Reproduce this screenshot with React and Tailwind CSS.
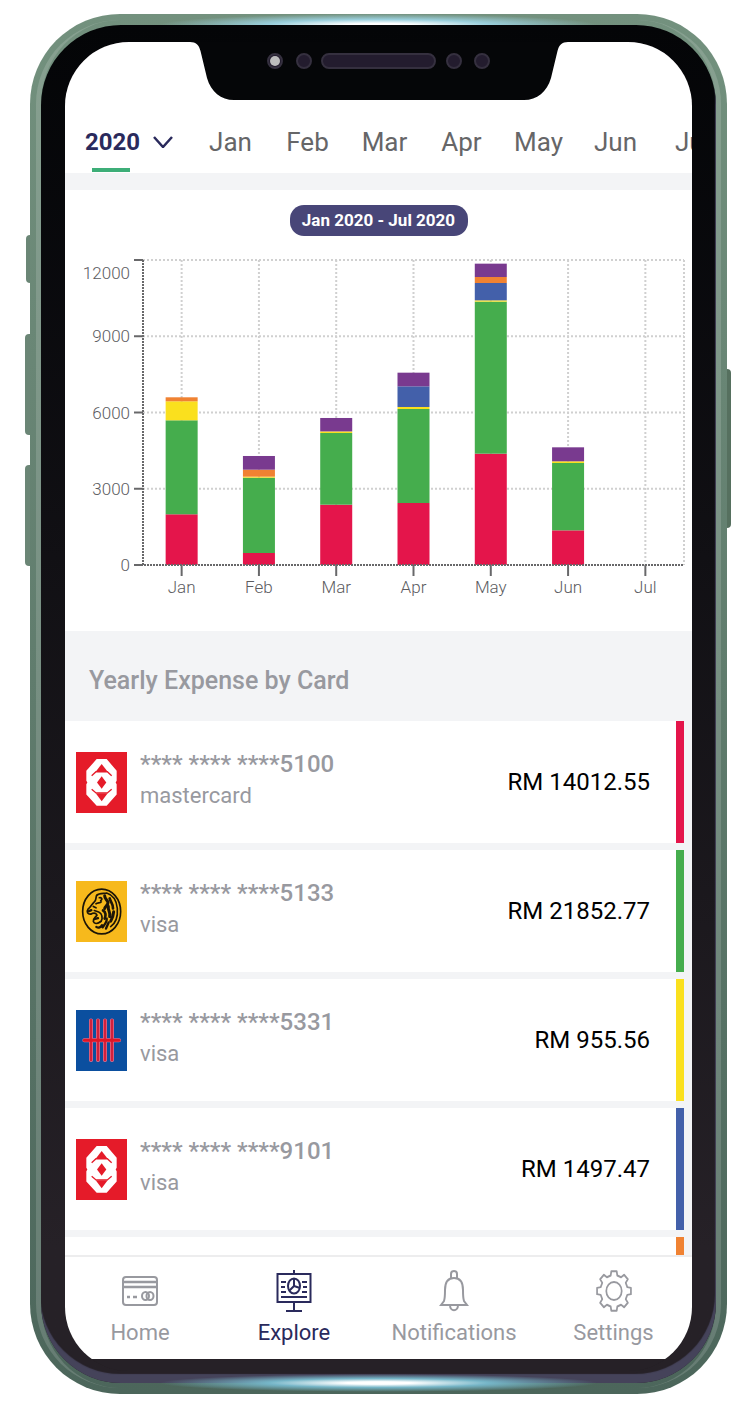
import React, { useState } from "react";

const months = ["Jan", "Feb", "Mar", "Apr", "May", "Jun", "Jul"];

const colors = {
  red: "#e4154b",
  green: "#45ad4d",
  yellow: "#fae01e",
  blue: "#4360aa",
  orange: "#f08232",
  purple: "#793a8f",
};

const expenses = [
  { month: "Jan", red: 1995, green: 3698, yellow: 748, orange: 157 },
  { month: "Feb", red: 472, green: 2963, yellow: 40, orange: 275, purple: 539 },
  { month: "Mar", red: 2373, green: 2820, yellow: 63, purple: 528 },
  { month: "Apr", red: 2439, green: 3699, yellow: 79, blue: 813, purple: 537 },
  {
    month: "May",
    red: 4380,
    green: 5981,
    yellow: 52,
    blue: 682,
    orange: 236,
    purple: 525,
  },
  { month: "Jun", red: 1364, green: 2649, yellow: 67, purple: 550 },
  { month: "Jul" },
];

const cards = [
  {
    number: "**** **** ****5100",
    type: "mastercard",
    amount: "RM 14012.55",
    bank: "octagon",
    bar: "bg-[#e4154b]",
  },
  {
    number: "**** **** ****5133",
    type: "visa",
    amount: "RM 21852.77",
    bank: "tiger",
    bar: "bg-[#45ad4d]",
  },
  {
    number: "**** **** ****5331",
    type: "visa",
    amount: "RM 955.56",
    bank: "lines",
    bar: "bg-[#fae01e]",
  },
  {
    number: "**** **** ****9101",
    type: "visa",
    amount: "RM 1497.47",
    bank: "octagon",
    bar: "bg-[#4360aa]",
  },
];

const OctagonLogo = () => (
  <svg viewBox="0 0 153 182" preserveAspectRatio="none" className="h-full w-full">
    <rect width="153" height="182" fill="#e51b29" />
    <path
      d="M62 21H92L122 56V86L119 91L122 96V127L92 160H62L31 127V96L34 91L31 86V56Z"
      fill="#fff"
    />
    <g fill="#e51b29" stroke="#e51b29">
      <path d="M77 36L95 59H59Z" stroke="none" />
      <path d="M77 72L91 91L77 110L63 91Z" stroke="none" />
      <path d="M77 147L95 123H59Z" stroke="none" />
      <path
        d="M47 71L60 59H94L107 71M47 111L60 122H94L107 111"
        fill="none"
        strokeWidth="4"
      />
    </g>
  </svg>
);

const TigerLogo = () => (
  <svg viewBox="0 0 153 182" preserveAspectRatio="none" className="h-full w-full">
    <rect width="153" height="182" fill="#f7b91c" />
    <ellipse
      cx="77"
      cy="91"
      rx="57"
      ry="67"
      fill="none"
      stroke="#1c1508"
      strokeWidth="5"
    />
    <g
      fill="none"
      stroke="#1c1508"
      strokeWidth="5"
      strokeLinecap="round"
      strokeLinejoin="round"
    >
      <path d="M62 43C70 36 82 38 92 36C112 42 122 62 124 82C126 106 118 126 104 136" />
      <path d="M62 43C58 51 62 56 55 62C48 68 46 76 36 84C30 92 36 100 44 99" />
      <path d="M44 99C54 94 60 96 63 102C57 109 51 112 52 121C55 129 64 128 71 123" />
      <path d="M71 123C80 120 80 106 75 98C71 92 62 90 55 88" />
      <path d="M60 68C66 64 72 67 76 62M52 76L60 80M70 50C78 48 80 56 74 58" />
      <path d="M86 44C86 54 94 56 96 64C96 72 88 74 86 82" strokeWidth="9" />
      <path d="M101 52C104 64 112 68 111 82M81 88C90 92 90 104 86 112" strokeWidth="8" />
      <path d="M97 76C95 88 104 92 101 106M113 92C112 104 109 112 104 120" strokeWidth="9" />
      <path d="M92 112C94 122 86 130 80 138M61 137C68 142 74 138 78 132M98 124L90 142" strokeWidth="7" />
      <path d="M39 90L46 87M57 113L66 111" strokeWidth="7" />
    </g>
  </svg>
);

const LinesLogo = () => (
  <svg viewBox="0 0 153 182" preserveAspectRatio="none" className="h-full w-full">
    <rect width="153" height="182" fill="#0b4f9f" />
    <g strokeLinecap="round">
      <path
        d="M45 31V149M66 31V149M87 31V149M108 31V149M25 90H129"
        stroke="#e07a98"
        strokeWidth="12"
      />
      <path
        d="M45 31V149M66 31V149M87 31V149M108 31V149"
        stroke="#d2203c"
        strokeWidth="8"
      />
      <path d="M25 90H129" stroke="#e01525" strokeWidth="9" />
    </g>
  </svg>
);

const logos = {
  octagon: OctagonLogo,
  tiger: TigerLogo,
  lines: LinesLogo,
};

const HomeIcon = () => (
  <svg viewBox="0 0 36 42" className="h-[42px] w-9" fill="none" stroke="currentColor" strokeWidth="2">
    <rect x="1" y="7" width="34" height="28" rx="3" />
    <path d="M1 12H35M1 17H35" strokeWidth="2.500" />
    <path d="M5 27H8M11 27H15" strokeWidth="2.500" />
    <ellipse cx="23.500" cy="26" rx="3.500" ry="4" />
    <ellipse cx="28" cy="26" rx="3.500" ry="4" />
  </svg>
);

const ExploreIcon = () => (
  <svg viewBox="0 0 36 42" className="h-[42px] w-9" fill="none" stroke="currentColor" strokeWidth="2">
    <path d="M18 0V4M1.500 4H34.500V32H1.500ZM18 32V41M10 41H26" />
    <path d="M5 12H10M5 17H9M5 22H10M26 12H31M27 17H31M26 22H31M5 27H31" />
    <ellipse cx="18" cy="16" rx="6" ry="7.500" />
    <path d="M18 8V16L13 21M18 16L24 18" />
  </svg>
);

const BellIcon = () => (
  <svg viewBox="0 0 36 42" className="h-[42px] w-9" fill="none" stroke="currentColor" strokeWidth="2">
    <path d="M5 35L8 31C9 28 9 24 9 20C9 12 12 8 18 8C24 8 27 12 27 20C27 24 27 28 28 31L31 35Z" />
    <path d="M15 8.500V4C15 0 21 0 21 4V8.500" />
    <path d="M14 35C14 42 22 42 22 35" />
  </svg>
);

const gearPath = () => {
  const points = [];
  for (let i = 0; i < 8; i++) {
    [
      [-14, 16],
      [-9, 20],
      [9, 20],
      [14, 16],
    ].forEach(([offset, r]) => {
      const angle = ((i * 45 + offset) * Math.PI) / 180;
      points.push(`${21 + r * Math.sin(angle)} ${21 - r * Math.cos(angle)}`);
    });
  }
  return `M${points.join("L")}Z`;
};

const SettingsIcon = () => (
  <svg
    viewBox="0 0 42 42"
    preserveAspectRatio="none"
    className="h-[42px] w-9"
    fill="none"
    stroke="currentColor"
    strokeWidth="2"
    strokeLinejoin="round"
  >
    <path d={gearPath()} />
    <circle cx="21" cy="21" r="9" />
  </svg>
);

const tabs = [
  { label: "Home", Icon: HomeIcon },
  { label: "Explore", Icon: ExploreIcon },
  { label: "Notifications", Icon: BellIcon },
  { label: "Settings", Icon: SettingsIcon },
];

const ExpenseChart = () => {
  const left = 78;
  const right = 619;
  const top = 10;
  const bottom = 315;
  const step = (right - left) / expenses.length;
  const y = (value) => bottom - (value / 12000) * (bottom - top);

  return (
    <svg viewBox="0 0 627 360" className="block w-full" role="img" aria-label="Monthly expenses">
      <g stroke="#d0d0d0" strokeWidth="2" strokeDasharray="2 2">
        {[3000, 6000, 9000, 12000].map((v) => (
          <line key={v} x1={left} x2={right} y1={y(v)} y2={y(v)} />
        ))}
        {expenses.map((e, i) => (
          <line
            key={e.month}
            x1={left + step * (i + 0.5)}
            x2={left + step * (i + 0.5)}
            y1={top}
            y2={bottom}
          />
        ))}
        <line x1={right} x2={right} y1={top} y2={bottom} />
      </g>

      {expenses.map((e, i) => {
        let total = 0;
        return Object.keys(colors)
          .filter((key) => e[key])
          .map((key) => {
            total += e[key];
            return (
              <rect
                key={e.month + key}
                x={left + step * (i + 0.5) - 16}
                y={y(total)}
                width="32"
                height={y(0) - y(e[key])}
                fill={colors[key]}
              />
            );
          });
      })}

      <g stroke="#68686a" strokeWidth="2">
        <path d={`M${left} ${top}V${bottom}H${right}`} fill="none" strokeDasharray="2 1" />
        {[0, 3000, 6000, 9000, 12000].map((v) => (
          <line key={v} x1={left - 9} x2={left} y1={y(v)} y2={y(v)} />
        ))}
        {expenses.map((e, i) => (
          <line
            key={e.month}
            x1={left + step * (i + 0.5)}
            x2={left + step * (i + 0.5)}
            y1={bottom}
            y2={bottom + 11}
          />
        ))}
      </g>

      <g fill="#5c5c5f" className="text-[17px] font-light">
        {[0, 3000, 6000, 9000].map((v) => (
          <text key={v} x="65" y={y(v) + 6} textAnchor="end">
            {v}
          </text>
        ))}
        <text x="65" y="29" textAnchor="end">
          12000
        </text>
        {expenses.map((e, i) => (
          <text key={e.month} x={left + step * (i + 0.5)} y="343" textAnchor="middle">
            {e.month}
          </text>
        ))}
      </g>
    </svg>
  );
};

const Notch = () => (
  <svg
    viewBox="0 0 378 58"
    className="absolute left-1/2 top-0 w-[378px] -translate-x-1/2"
    aria-hidden="true"
  >
    <path
      d="M0 0C6 0 9 3 10.500 9L17 36C21 50 31 58 44 58H334C347 58 357 50 361 36L367.500 9C369 3 372 0 378 0Z"
      fill="#050608"
    />
    <g fill="#231c2e" stroke="#35303f" strokeWidth="2">
      <circle cx="85" cy="19" r="7" />
      <circle cx="114" cy="19" r="7" />
      <rect x="132" y="12" width="113" height="14" rx="7" />
      <circle cx="264" cy="19" r="7" />
      <circle cx="292" cy="19" r="7" />
    </g>
    <circle cx="85" cy="19" r="5" fill="#bdbdbd" />
  </svg>
);

const App = () => {
  const [year, setYear] = useState("2020");
  const [activeTab, setActiveTab] = useState("Explore");

  return (
    <div className="bg-white pt-[14px] pr-[13px] pb-[15px] pl-[30px] font-['Roboto','Liberation_Sans',sans-serif]">
      <div className="relative">
        {/* Side Buttons */}
        <div className="absolute -left-1 top-[221px] h-[48px] w-2 rounded-l bg-[#6b8676]"></div>
        <div className="absolute -left-[5px] top-[320px] h-[101px] w-2 rounded-l bg-[#6b8676]"></div>
        <div className="absolute -left-[5px] top-[451px] h-[101px] w-2 rounded-l bg-[#6b8676]"></div>
        <div className="absolute -right-1 top-[355px] h-[159px] w-2 rounded-r bg-[#56705f]"></div>

        <div className="relative overflow-hidden rounded-[90px] bg-linear-to-b from-[#73917e] to-[#4c665b] p-[11px]">
          <div className="absolute inset-[6px] rounded-[84px] border-[5px] border-y-0 border-white/15"></div>
          <div className="absolute inset-x-[130px] top-0 h-[22px] bg-[radial-gradient(ellipse_50%_50%_at_50%_50%,#ffffff_15%,#9bd0dd_50%,transparent_100%)]"></div>
          <div className="relative rounded-[80px] bg-linear-to-b from-[#040507] to-[#262127] to-90% px-6 pt-[17px] pb-3 shadow-[inset_-1px_-9px_1px_#45435a]">
            <div className="relative overflow-hidden rounded-[64px] bg-[#262127]">
              <div className="bg-white">
                <Notch />

                {/* Month Filter */}
                <header className="flex overflow-hidden pt-[76px] pb-px">
                  <div className="w-[127px] shrink-0">
                    <div className="relative flex h-12 items-center">
                      <select
                        aria-label="Year"
                        value={year}
                        onChange={(e) => setYear(e.target.value)}
                        className="h-12 w-full appearance-none bg-transparent pl-5 text-2xl font-bold text-[#2a2a5c] outline-none"
                      >
                        <option>2020</option>
                        <option>2019</option>
                      </select>
                      <svg
                        viewBox="0 0 20 12"
                        className="pointer-events-none absolute right-[19px] h-3 w-5"
                        fill="none"
                        stroke="#2a2a5c"
                        strokeWidth="2.500"
                      >
                        <path d="M1 1L10 11L19 1" />
                      </svg>
                    </div>
                    <div className="mt-[2px] ml-[27px] h-1 w-[38px] bg-[#3dae78]"></div>
                  </div>
                  {months.map((month) => (
                    <button
                      key={month}
                      className="h-12 w-[77px] shrink-0 text-[26px] text-[#666668]"
                    >
                      {month}
                    </button>
                  ))}
                </header>

                {/* Chart */}
                <section className="border-t-[17px] border-[#f3f4f6] pt-[15px] pb-[21px]">
                  <div className="mx-auto mb-[14px] h-[31px] w-[178px] rounded-[14px] bg-[#484678] text-center text-[17px] leading-[31px] font-bold text-white">
                    Jan 2020 - Jul 2020
                  </div>
                  <ExpenseChart />
                </section>

                {/* Cards */}
                <section className="bg-[#f3f4f6]">
                  <h2 className="flex h-[90px] items-center pt-[10px] pl-6 text-[25px] font-medium text-[#98999f]">
                    Yearly Expense by Card
                  </h2>
                  <ul className="flex flex-col gap-[7px]">
                    {cards.map((card) => {
                      const Logo = logos[card.bank];
                      return (
                        <li key={card.number} className="flex h-[122px] pr-2">
                          <div className="flex flex-1 items-center bg-white pl-[11px]">
                            <div className="h-[61px] w-[51px]">
                              <Logo />
                            </div>
                            <div className="ml-[13px] flex-1 pb-1 text-[#98999f]">
                              <p className="text-2xl leading-8 font-medium">{card.number}</p>
                              <p className="text-[22px] leading-8">{card.type}</p>
                            </div>
                            <p className="pr-[26px] text-2xl text-black">{card.amount}</p>
                          </div>
                          <div className={`w-2 ${card.bar}`}></div>
                        </li>
                      );
                    })}
                    <li className="flex h-[18px] pr-2">
                      <div className="flex-1 bg-white"></div>
                      <div className="w-2 bg-[#f08232]"></div>
                    </li>
                  </ul>
                </section>

                {/* Bottom Navigation */}
                <nav className="grid h-[104px] grid-cols-[150fr_158fr_162fr_157fr] border-t-2 border-[#ededee] pt-[13px]">
                  {tabs.map(({ label, Icon }) => (
                    <button
                      key={label}
                      onClick={() => setActiveTab(label)}
                      className={`flex flex-col items-center gap-[5px] text-[22px] leading-8 ${
                        activeTab === label ? "text-[#2a2a5c]" : "text-[#98999f]"
                      }`}
                    >
                      <Icon />
                      {label}
                    </button>
                  ))}
                </nav>
              </div>
              <div className="h-3 bg-[#262127]"></div>
            </div>
          </div>
          <div className="absolute inset-x-[130px] bottom-0 h-[22px] bg-[radial-gradient(ellipse_50%_40%_at_50%_50%,#ffffff_15%,#76b6c8_50%,transparent_100%)]"></div>
        </div>
      </div>
    </div>
  );
};

export default App;
